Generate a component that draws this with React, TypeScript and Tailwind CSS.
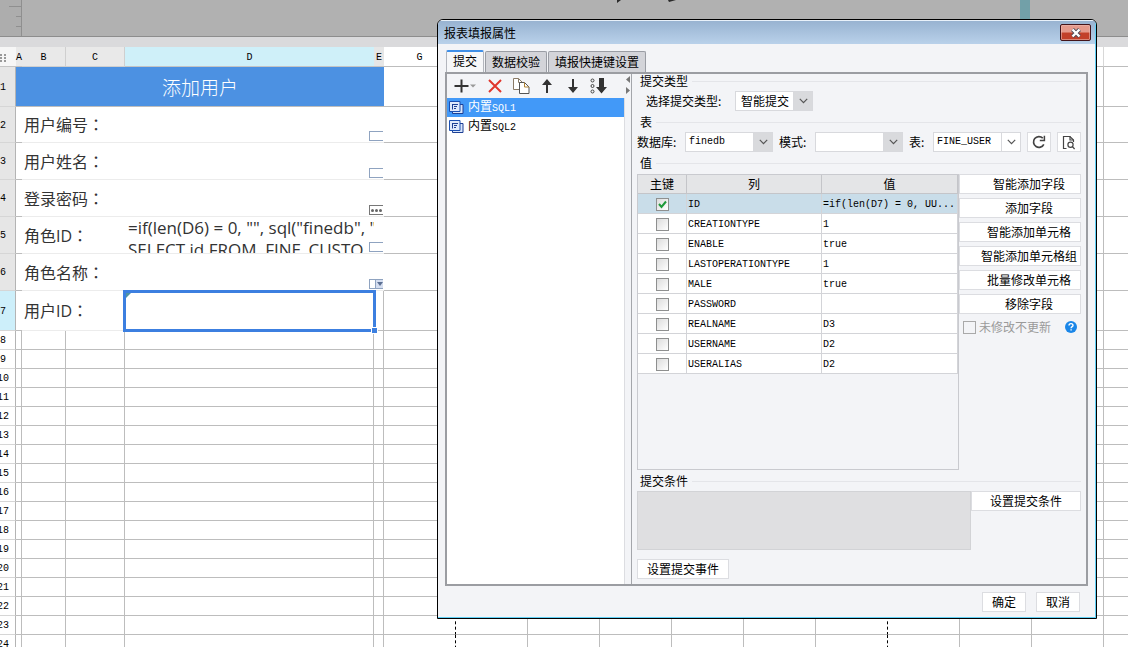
import React from "react";

const rowHeights = [
  "h-[40px]",
  "h-[36px]",
  "h-[37px]",
  "h-[37px]",
  "h-[37px]",
  "h-[37px]",
  "h-[40px]",
];

const formRows = [
  { label: "用户编号", widget: "text" },
  { label: "用户姓名", widget: "text" },
  { label: "登录密码", widget: "password" },
  { label: "角色ID", widget: "text", formula: true },
  { label: "角色名称", widget: "combo" },
  { label: "用户ID", widget: "", selected: true },
];

const emptyRows = [8, 9, 10, 11, 12, 13, 14, 15, 16, 17, 18, 19, 20, 21, 22, 23, 24];

const restCols = [0, 1, 2, 3, 4, 5, 6, 7, 8, 9, 10];

const fields = [
  { name: "ID", value: "=if(len(D7) = 0, UU...", key: true },
  { name: "CREATIONTYPE", value: "1", key: false },
  { name: "ENABLE", value: "true", key: false },
  { name: "LASTOPERATIONTYPE", value: "1", key: false },
  { name: "MALE", value: "true", key: false },
  { name: "PASSWORD", value: "", key: false },
  { name: "REALNAME", value: "D3", key: false },
  { name: "USERNAME", value: "D2", key: false },
  { name: "USERALIAS", value: "D2", key: false },
];

const fieldActions = [
  "智能添加字段",
  "添加字段",
  "智能添加单元格",
  "智能添加单元格组",
  "批量修改单元格",
  "移除字段",
];

// page breaks fall after the first and the seventh plain column
const restBorder = (i: number) => {
  if (i === 10) return "";
  return i === 0 || i === 6
    ? "border-r border-r-black [border-right-style:dashed]"
    : "border-r border-r-[#bdbdbd]";
};

const RestCells = () => (
  <>
    {restCols.map((i) => (
      <td key={i} className={`border-b border-b-[#bdbdbd] ${restBorder(i)}`}></td>
    ))}
  </>
);

const RowHead = ({ n, bg }: { n: number; bg: string }) => (
  <th className={`border-r border-b border-r-[#b4b4b4] border-b-[#d6d6d6] p-0 pt-[2px] font-normal ${bg}`}>
    <div className="flex w-[6px] justify-center">{n}</div>
  </th>
);

const Widget = ({ type }: { type: string }) => {
  if (!type) return null;
  return (
    <div
      className={`absolute -right-[9px] bottom-px flex h-[10px] w-[14px] items-center border-y border-l bg-white ${
        type === "password" ? "justify-around border-[#777]" : "border-[#8fa3c0]"
      }`}
    >
      {type === "password" &&
        [0, 1, 2].map((i) => <span key={i} className="size-[3px] rounded-full bg-[#666]"></span>)}
      {type === "combo" && (
        <span className="ml-auto flex h-full w-[8px] items-center justify-center border-l border-[#8fa3c0] bg-[#d5def0]">
          <svg width="6" height="4" viewBox="0 0 6 4">
            <path d="M0 0h6L3 4z" fill="#5b6f92" />
          </svg>
        </span>
      )}
    </div>
  );
};

const Sheet = () => (
  <table className="w-full table-fixed border-separate border-spacing-0 bg-white text-black">
    <colgroup>
      <col className="w-[16px]" />
      <col className="w-[6px]" />
      <col className="w-[44px]" />
      <col className="w-[59px]" />
      <col className="w-[249px]" />
      <col className="w-[10px]" />
      {restCols.map((i) => (
        <col key={i} className={i === 10 ? "" : "w-[72px]"} />
      ))}
    </colgroup>
    <thead className="font-['Liberation_Mono',monospace] text-[10px] leading-3">
      <tr className="h-[20px]">
        <th className="border-b border-[#c4c4c4] bg-[#f6f6f6] p-0 pt-[3px]">
          <svg width="7" height="9" viewBox="0 0 7 9" fill="#999">
            <path d="M0 0h2v2H0zM4 0h2v2H4zM0 3h2v2H0zM4 3h2v2H4zM0 6h2v2H0zM4 6h2v2H4z" />
          </svg>
        </th>
        <th className="border-b border-[#c4c4c4] bg-[#e9e9e9] p-0 pt-[3px] font-normal">
          <div className="flex justify-center">A</div>
        </th>
        <th className="border-r border-b border-[#cfcfcf] bg-[#e9e9e9] p-0 pt-[3px] font-normal">B</th>
        <th className="border-r border-b border-[#cfcfcf] bg-[#e9e9e9] p-0 pt-[3px] font-normal">C</th>
        <th className="border-b border-[#c4c4c4] bg-[#cff0f9] p-0 pt-[3px] font-normal">D</th>
        <th className="border-b border-[#c4c4c4] bg-[#e6e6e6] p-0 pt-[3px] font-normal">E</th>
        {restCols.map((i) => (
          <th
            key={i}
            className={`border-b border-b-[#bdbdbd] p-0 pt-[3px] font-normal ${
              i === 10 ? "" : "border-r border-r-[#d8d8d8]"
            }`}
          >
            {i === 0 ? "G" : ""}
          </th>
        ))}
      </tr>
    </thead>
    <tbody className="font-['Liberation_Mono',monospace] text-[10px] leading-3">
      <tr className={rowHeights[0]}>
        <RowHead n={1} bg="bg-[#e6e6e6]" />
        <td
          colSpan={5}
          className="border-b border-[#bdbdbd] bg-[#4c91e2] p-0 text-center font-['Noto_Sans_CJK_SC',sans-serif] text-[19px] leading-6 font-light text-white"
        >
          添加用户
        </td>
        <RestCells />
      </tr>
      {formRows.map((row, i) => (
        <tr key={row.label} className={rowHeights[i + 1]}>
          <RowHead n={i + 2} bg={row.selected ? "bg-[#cdeffa]" : "bg-[#e6e6e6]"} />
          <td className="border-b border-[#bdbdbd] p-0"></td>
          <td
            colSpan={2}
            className="border-b border-[#ececec] p-0 pl-[2px] font-['Open_Sans','Noto_Sans_CJK_SC',sans-serif] text-base leading-6 text-[#333]"
          >
            {row.label}
            <span className="font-['Noto_Sans_CJK_TC',sans-serif]">：</span>
          </td>
          <td className="relative border-b border-[#ececec] p-0">
            {row.formula && (
              <div className="h-[36px] overflow-hidden pl-[3px] font-['Open_Sans',sans-serif] text-[17px] leading-[22px] whitespace-pre text-[#333]">
                {'=if(len(D6) = 0, "", sql("finedb", "\nSELECT id FROM  FINE_CUSTO'}
              </div>
            )}
            <Widget type={row.widget} />
            {row.selected && (
              <div className="absolute -inset-x-[2px] -top-px -bottom-[2px] z-10 border-[3px] border-[#3c7fe0]">
                <svg className="absolute left-0 top-0" width="5" height="5" viewBox="0 0 5 5">
                  <path d="M0 0h5L0 5z" fill="#4f93a5" />
                </svg>
                <span className="absolute -right-[5px] -bottom-[5px] size-[7px] border border-white bg-[#3c7fe0]"></span>
              </div>
            )}
          </td>
          <td
            className={
              row.selected
                ? "border-r border-b border-[#bdbdbd] p-0"
                : "border-b border-[#ececec] p-0"
            }
          ></td>
          <RestCells />
        </tr>
      ))}
      {emptyRows.map((n) => (
        <tr key={n} className="h-[19px]">
          <RowHead n={n} bg="bg-white" />
          {[0, 1, 2, 3, 4].map((c) => (
            <td key={c} className="border-r border-b border-[#bdbdbd] p-0"></td>
          ))}
          <RestCells />
        </tr>
      ))}
    </tbody>
  </table>
);

const GroupTitle = ({ children }: { children: React.ReactNode }) => (
  <div className="flex h-[14px] items-center gap-1 pl-[3px]">
    <span>{children}</span>
    <span className="h-px flex-1 bg-[#e4e5e9]"></span>
  </div>
);

type SelectProps = {
  id: string;
  value: string;
  width: string;
  mono?: boolean;
  light?: boolean;
};

const Select = ({ id, value, width, mono, light }: SelectProps) => (
  <div className={`relative h-[20px] ${width}`}>
    <select
      id={id}
      defaultValue={value}
      className={`block h-full w-full appearance-none border border-[#d8d9dd] bg-white pr-5 text-black outline-none ${
        mono ? "pl-[3px] font-['Liberation_Mono',monospace] text-[10px]" : "pl-[5px] text-xs"
      }`}
    >
      <option value={value}>{value}</option>
    </select>
    <span
      className={`pointer-events-none absolute inset-y-0 right-0 flex w-[20px] items-center justify-center border border-[#d8d9dd] ${
        light ? "bg-white" : "bg-[#d9dadd]"
      }`}
    >
      <svg width="9" height="6" viewBox="0 0 9 6" fill="none" stroke="#555" strokeWidth="1.2">
        <path d="M0.8 0.8L4.5 4.6L8.2 0.8" />
      </svg>
    </span>
  </div>
);

const Button = ({ children, className = "" }: { children: React.ReactNode; className?: string }) => (
  <button
    type="button"
    className={`flex h-[20px] items-center justify-center border border-[#dcdde1] bg-white whitespace-nowrap ${className}`}
  >
    {children}
  </button>
);

const Toolbar = () => (
  <div className="flex h-[24px] items-center pl-[7px]">
    <button type="button" aria-label="添加" className="flex w-[34px] items-center gap-px">
      <svg width="15" height="14" viewBox="0 0 15 14" stroke="#333" strokeWidth="2">
        <path d="M7.5 0.5v13M0.5 7h14" />
      </svg>
      <svg width="6" height="4" viewBox="0 0 6 4">
        <path d="M0 0.5h6L3 3.5z" fill="#999" />
      </svg>
    </button>
    <button type="button" aria-label="删除" className="w-[25px]">
      <svg width="14" height="14" viewBox="0 0 14 14" stroke="#e0362c" strokeWidth="2">
        <path d="M1 1l12 12M13 1L1 13" />
      </svg>
    </button>
    <button type="button" aria-label="复制" className="w-[28px]">
      <svg width="17" height="16" viewBox="0 0 17 16" fill="#fff" stroke="#555">
        <path d="M0.5 0.5h5l4 4v7h-9z" stroke="#8a7a66" />
        <path d="M5.5 0.5v4h4" fill="none" stroke="#8a7a66" />
        <path d="M6.5 4.5h5l4.5 4.5v6.5H6.5z" />
        <path d="M11.5 4.5v4.5h4.5" fill="none" stroke="#b08030" />
      </svg>
    </button>
    <button type="button" aria-label="上移" className="w-[26px]">
      <svg width="12" height="14" viewBox="0 0 12 14" fill="#333">
        <path d="M6 0L11 6H7v8H5V6H1z" />
      </svg>
    </button>
    <button type="button" aria-label="下移" className="w-[23px]">
      <svg width="12" height="14" viewBox="0 0 12 14" fill="#333">
        <path d="M6 14L11 8H7V0H5v8H1z" />
      </svg>
    </button>
    <button type="button" aria-label="排序">
      <svg width="17" height="16" viewBox="0 0 17 16">
        <g fill="none" stroke="#444">
          <circle cx="2.5" cy="2.5" r="1.5" />
          <circle cx="2.5" cy="8" r="1.5" />
          <circle cx="2.5" cy="13.5" r="1.5" />
        </g>
        <path d="M9 0h5v9h3l-5.5 6.5L6 9h3z" fill="#333" />
      </svg>
    </button>
  </div>
);

const SqlIcon = () => (
  <svg width="15" height="13" viewBox="0 0 15 13">
    <path d="M3.5 3.5h10.5v9H3.5z" fill="#d9e6fb" stroke="#1c3f94" />
    <path d="M0.5 0.5h10.5v10H0.5z" fill="#dfe9fb" stroke="#1c4fb0" />
    <path d="M3 3.5h6M3.5 3.5v5M5 5.5h3M5 7.5h2" fill="none" stroke="#1c3f94" />
  </svg>
);

const SubmitPanel = () => (
  <div className="flex flex-1 flex-col border-l border-[#a4a6ab] pr-[5px] pb-[5px] pl-[5px]">
    <GroupTitle>提交类型</GroupTitle>
    <div className="mt-[3px] mb-1 flex items-center pl-[9px]">
      <label htmlFor="submit-type" className="w-[89px]">选择提交类型:</label>
      <Select id="submit-type" value="智能提交" width="w-[78px]" />
    </div>

    <GroupTitle>表</GroupTitle>
    <div className="mt-[3px] mb-1 flex items-center gap-[6px]">
      <label htmlFor="database" className="w-[42px] whitespace-nowrap">数据库:</label>
      <Select id="database" value="finedb" width="w-[88px]" mono />
      <label htmlFor="schema" className="w-[30px] whitespace-nowrap">模式:</label>
      <Select id="schema" value="" width="w-[88px]" />
      <label htmlFor="table" className="w-[18px] whitespace-nowrap">表:</label>
      <Select id="table" value="FINE_USER" width="w-[88px]" mono light />
      <Button className="w-[24px]">
        <svg aria-label="刷新" width="14" height="14" viewBox="0 0 14 14" fill="none" stroke="#444" strokeWidth="1.7">
          <path d="M11.8 9.3A5.4 5.4 0 1 1 10.8 3.2" />
          <path d="M12.4 0.8v4.6H7.8" strokeWidth="1.5" />
        </svg>
      </Button>
      <Button className="w-[24px]">
        <svg aria-label="预览" width="14" height="15" viewBox="0 0 14 15" fill="none" stroke="#444" strokeWidth="1.2">
          <path d="M4.5 13.5H1.500v-12h6.5l3.5 3.5v2" />
          <path d="M8 1.5v3.5h3.5" />
          <circle cx="8.5" cy="9.8" r="2.6" />
          <path d="M10.4 11.7l2.2 2.3" />
        </svg>
      </Button>
    </div>

    <GroupTitle>值</GroupTitle>
    <div className="mt-1 mb-1 flex">
      <div className="h-[296px] flex-1 border border-[#c9cacf]">
        <table className="w-full table-fixed border-separate border-spacing-0">
          <thead>
            <tr className="h-[19px] bg-[#e4e5e7]">
              <th className="w-[49px] border-r border-b border-[#c4c5c9] p-0 font-normal leading-4">主键</th>
              <th className="w-[135px] border-r border-b border-[#c4c5c9] p-0 font-normal leading-4">列</th>
              <th className="border-r border-b border-[#c4c5c9] p-0 font-normal leading-4">值</th>
            </tr>
          </thead>
          <tbody className="font-['Liberation_Mono',monospace] text-[10px] leading-3">
            {fields.map((field) => (
              <tr key={field.name} className={field.key ? "h-[20px] bg-[#c9dde9]" : "h-[20px] bg-white"}>
                <td className="border-r border-b border-[#d3d4d8] p-0 pt-px">
                  <div className="relative mx-auto size-[13px]">
                    <input
                      type="checkbox"
                      aria-label={field.name}
                      defaultChecked={field.key}
                      className="peer block size-[13px] appearance-none border border-[#8e8f8f] bg-linear-to-br from-[#dcdcdc] to-white"
                    />
                    <svg
                      className="pointer-events-none absolute inset-[2px] hidden peer-checked:block"
                      width="9"
                      height="9"
                      viewBox="0 0 9 9"
                      fill="none"
                      stroke="#1f9a3a"
                      strokeWidth="2"
                    >
                      <path d="M1 4l2.5 3L8 1.5" />
                    </svg>
                  </div>
                </td>
                <td className="border-r border-b border-[#d3d4d8] p-0 pt-[2px] pl-px">{field.name}</td>
                <td className="overflow-hidden border-r border-b border-[#d3d4d8] p-0 pt-[2px] pl-px whitespace-nowrap">
                  {field.value}
                </td>
              </tr>
            ))}
          </tbody>
        </table>
      </div>
      <div className="flex w-[122px] flex-col gap-1">
        {fieldActions.map((action) => (
          <Button key={action} className="pl-[18px]">
            {action}
          </Button>
        ))}
        <div className="mt-[2px] flex h-[14px] items-center gap-[3px] pl-1 text-[#9a9a9a]">
          <input id="no-update" type="checkbox" className="size-[13px] appearance-none border border-[#a9a9a9] bg-[#f3f4f7]" />
          <label htmlFor="no-update">未修改不更新</label>
          <svg className="mr-1 ml-auto" width="12" height="12" viewBox="0 0 12 12" fill="none">
            <circle cx="6" cy="6" r="6" fill="#1a86e8" />
            <path d="M4 4.6C4 3.3 4.9 2.6 6 2.6S8 3.3 8 4.4C8 5.6 6.1 5.700 6.1 7.2" stroke="#fff" strokeWidth="1.4" />
            <path d="M5.4 8.2h1.4v1.4H5.4z" fill="#fff" />
          </svg>
        </div>
      </div>
    </div>

    <GroupTitle>提交条件</GroupTitle>
    <div className="mt-[3px] flex">
      <div className="h-[59px] flex-1 border border-[#d2d3d6] bg-[#dfdfe1]"></div>
      <Button className="w-[110px]">设置提交条件</Button>
    </div>
    <Button className="mt-[9px] w-[92px]">设置提交事件</Button>
  </div>
);

const Dialog = () => (
  <div
    role="dialog"
    aria-label="报表填报属性"
    className="absolute top-[19px] left-[437px] z-20 w-[660px] overflow-hidden rounded-t-[6px] border border-black bg-[#f3f4f7] font-['Noto_Sans_CJK_SC',sans-serif] text-xs leading-[14px] text-black"
  >
    <div className="border-t border-r border-b border-t-[#e8f1fa] border-r-[#5fd0f5] border-b-[#5fd0f5]">
      <div className="flex h-[23px] items-center justify-between bg-linear-to-b from-[#98b3d1] to-[#b9d1ea] pr-1 pl-[6px]">
        <span>报表填报属性</span>
        <button
          type="button"
          aria-label="关闭"
          className="flex h-[17px] w-[31px] items-center justify-center rounded-[2px] border border-[#43141a] bg-linear-to-b from-[#e59a8c] from-45% to-[#c2402a] to-55% ring-1 ring-[#e9b9b0]/60 ring-inset"
        >
          <svg width="12" height="10" viewBox="0 0 12 10">
            <path d="M2.5 1.5l7 7M9.5 1.5l-7 7" stroke="#4b4b58" strokeWidth="4" />
            <path d="M2.5 1.5l7 7M9.5 1.5l-7 7" stroke="#fff" strokeWidth="2.4" />
          </svg>
        </button>
      </div>

      <div className="px-[7px] pt-[6px] pb-[5px]">
        <div className="flex h-[22px] items-end gap-px pl-px">
          <button type="button" className="h-full w-[38px] rounded-t-[2px] border-x border-t-2 border-x-[#b3b6bd] border-t-[#3f8fe8] bg-[#f6f7f9] pb-[2px]">
            提交
          </button>
          <button type="button" className="h-[21px] w-[62px] rounded-t-[2px] border border-b-0 border-[#9a9da4] bg-[#d3d4d9]">
            数据校验
          </button>
          <button type="button" className="h-[21px] w-[98px] rounded-t-[2px] border border-b-0 border-[#9a9da4] bg-[#d3d4d9]">
            填报快捷键设置
          </button>
        </div>

        <div className="flex border-2 border-[#9b9da2]">
          <div className="flex w-[178px] flex-col">
            <Toolbar />
            <ul className="flex-1 border-r border-[#dcdde1] bg-white">
              <li className="flex h-[19px] items-center gap-1 bg-[#4299f8] pl-[2px] text-white">
                <SqlIcon />
                <span>
                  内置<span className="font-['Liberation_Mono',monospace] text-[10px]">SQL1</span>
                </span>
              </li>
              <li className="flex h-[19px] items-center gap-1 pl-[2px]">
                <SqlIcon />
                <span>
                  内置<span className="font-['Liberation_Mono',monospace] text-[10px]">SQL2</span>
                </span>
              </li>
            </ul>
          </div>
          <div className="flex w-[6px] flex-col items-center gap-1 pt-[2px]">
            <svg width="4" height="7" viewBox="0 0 4 7">
              <path d="M4 0v7L0 3.5z" fill="#777" />
            </svg>
            <svg width="4" height="7" viewBox="0 0 4 7">
              <path d="M0 0v7l4-3.5z" fill="#777" />
            </svg>
          </div>
          <SubmitPanel />
        </div>

        <div className="mt-[6px] flex justify-end gap-[10px] pr-2">
          <Button className="w-[44px]">确定</Button>
          <Button className="w-[44px]">取消</Button>
        </div>
      </div>
    </div>
  </div>
);

const App = () => {
  return (
    <div className="relative h-screen overflow-hidden bg-white">
      {/* dimmed preview strip with its ruler */}
      <div className="flex h-[37px] border-b border-[#8d8d8d] bg-[#b1b1b1]">
        <svg width="22" height="36" viewBox="0 0 22 36" stroke="#8f8f8f">
          <path d="M0 0h21v36H0z" fill="#adadad" stroke="none" />
          <path d="M9 6.5h12M16 16.5h5M16 26.5h5M21.5 0v36" />
        </svg>
        <svg className="ml-[594px]" width="64" height="4" viewBox="0 0 64 4" fill="#2b2b2b">
          <path d="M1 0h4L1 3zM52 0h8l-7 2z" />
        </svg>
        <div className="ml-[340px] w-[10px] bg-[#72a0a8]"></div>
      </div>
      <div className="h-[10px] bg-[#dadadc]"></div>
      <Sheet />
      <Dialog />
    </div>
  );
};

export default App;
